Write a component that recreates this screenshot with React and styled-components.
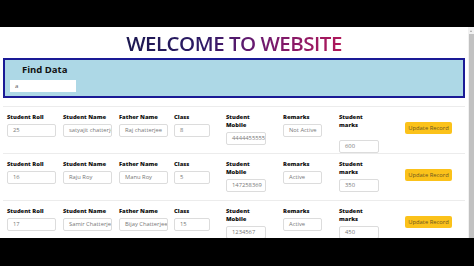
import React from "react";
import styled, { createGlobalStyle } from "styled-components";

const Global = createGlobalStyle`
  html, body { margin: 0; padding: 0; background: #000; overflow: hidden; }
  body { font-family: "Open Sans", "Liberation Sans", sans-serif; }
  * { box-sizing: border-box; }
`;

const Screen = styled.div`
  width: 474px;
  height: 266px;
  display: flex;
  flex-direction: column;
  background: #000;
`;

const Band = styled.div`
  height: ${(p) => p.$h}px;
  background: #000;
  flex: none;
`;

const Viewport = styled.div`
  height: 211px;
  display: flex;
  background: #fff;
  overflow: hidden;
`;

const Page = styled.div`
  flex: 1;
  padding: 0 3px;
`;

const Title = styled.h1`
  margin: 0;
  padding-top: 4px;
  height: 31px;
  text-align: center;
  font-size: 20.5px;
  font-weight: 600;
  line-height: 24px;
  letter-spacing: -0.5px;
  span {
    background: linear-gradient(90deg, #1c1850 0%, #2c1a66 35%, #6a1a70 60%, #b0185a 100%);
    -webkit-background-clip: text;
    background-clip: text;
    color: transparent;
  }
`;

const FindPanel = styled.div`
  height: 40px;
  background: #add8e6;
  border: 2px solid #1a1a96;
  padding: 3px 5px 0;
`;

const FindTitle = styled.div`
  font-size: 9.5px;
  font-weight: 700;
  line-height: 14px;
  color: #111;
  padding-left: 12px;
`;

const FindInput = styled.div`
  margin-top: 3px;
  width: 66px;
  height: 12px;
  background: #fff;
  font-size: 6px;
  line-height: 12px;
  color: #555;
  padding-left: 5px;
`;

const List = styled.div`
  margin-top: 8px;
`;

const Row = styled.div`
  display: grid;
  grid-template-columns: 56px 56px 55px 52px 57px 56px 66px auto;
  align-items: start;
  height: 47px;
  border-top: 1px solid #ececec;
  padding: 6px 0 0 4px;
`;

const Field = styled.div`
  display: flex;
  flex-direction: column;
  width: ${(p) => p.$w}px;
`;

const Label = styled.div`
  font-size: 5.8px;
  font-weight: 800;
  line-height: 8px;
  color: #111;
  margin-bottom: 3px;
`;

const Box = styled.div`
  width: ${(p) => (p.$w ? `${p.$w}px` : "100%")};
  height: 13px;
  border: 1px solid #dcdcdc;
  border-radius: 2px;
  background: #fff;
  font-size: 5.8px;
  line-height: 11px;
  color: #777;
  padding-left: 5px;
  white-space: nowrap;
  overflow: hidden;
  margin-top: ${(p) => p.$mt || 0}px;
`;

const Button = styled.button`
  margin-top: 9px;
  width: 47px;
  height: 12px;
  padding: 0;
  border: none;
  border-radius: 2px;
  background: #fbc21a;
  color: #6b5520;
  font-family: inherit;
  font-size: 5.8px;
  line-height: 12px;
  white-space: nowrap;
`;

const Scrollbar = styled.div`
  width: 6px;
  flex: none;
  background: #f1f1f1;
  display: flex;
  flex-direction: column;
  align-items: center;
`;

const Arrow = styled.div`
  width: 0;
  height: 0;
  margin-top: 3px;
  border-left: 1.5px solid transparent;
  border-right: 1.5px solid transparent;
  border-bottom: 2px solid #a3a3a3;
`;

const Thumb = styled.div`
  margin-top: 2px;
  width: 5px;
  flex: 1;
  background: #c1c1c1;
`;

const records = [
  { roll: "25", name: "satyajit chatterjee", father: "Raj chatterjee", cls: "8", mobile: "4444455555", remarks: "Not Active", marks: "600", gap: 8 },
  { roll: "16", name: "Raju Roy", father: "Manu Roy", cls: "5", mobile: "147258369", remarks: "Active", marks: "350", gap: 0 },
  { roll: "17", name: "Samir Chatterjee", father: "Bijay Chatterjee", cls: "15", mobile: "1234567", remarks: "Active", marks: "450", gap: 0 },
];

function Record({ r }) {
  return (
    <Row>
      <Field $w={49}><Label>Student Roll</Label><Box>{r.roll}</Box></Field>
      <Field $w={49}><Label>Student Name</Label><Box>{r.name}</Box></Field>
      <Field $w={49}><Label>Father Name</Label><Box>{r.father}</Box></Field>
      <Field $w={36}><Label>Class</Label><Box>{r.cls}</Box></Field>
      <Field $w={40}><Label>Student Mobile</Label><Box>{r.mobile}</Box></Field>
      <Field $w={39}><Label>Remarks</Label><Box>{r.remarks}</Box></Field>
      <Field $w={34}><Label>Student marks</Label><Box $w={40} $mt={r.gap}>{r.marks}</Box></Field>
      <Button>Update Record</Button>
    </Row>
  );
}

export default function App() {
  return (
    <Screen>
      <Global />
      <Band $h={27} />
      <Viewport>
        <Page>
          <Title><span>WELCOME TO WEBSITE</span></Title>
          <FindPanel>
            <FindTitle>Find Data</FindTitle>
            <FindInput>a</FindInput>
          </FindPanel>
          <List>
            {records.map((r) => <Record key={r.roll} r={r} />)}
          </List>
        </Page>
        <Scrollbar><Arrow /><Thumb /></Scrollbar>
      </Viewport>
      <Band $h={28} />
    </Screen>
  );
}
